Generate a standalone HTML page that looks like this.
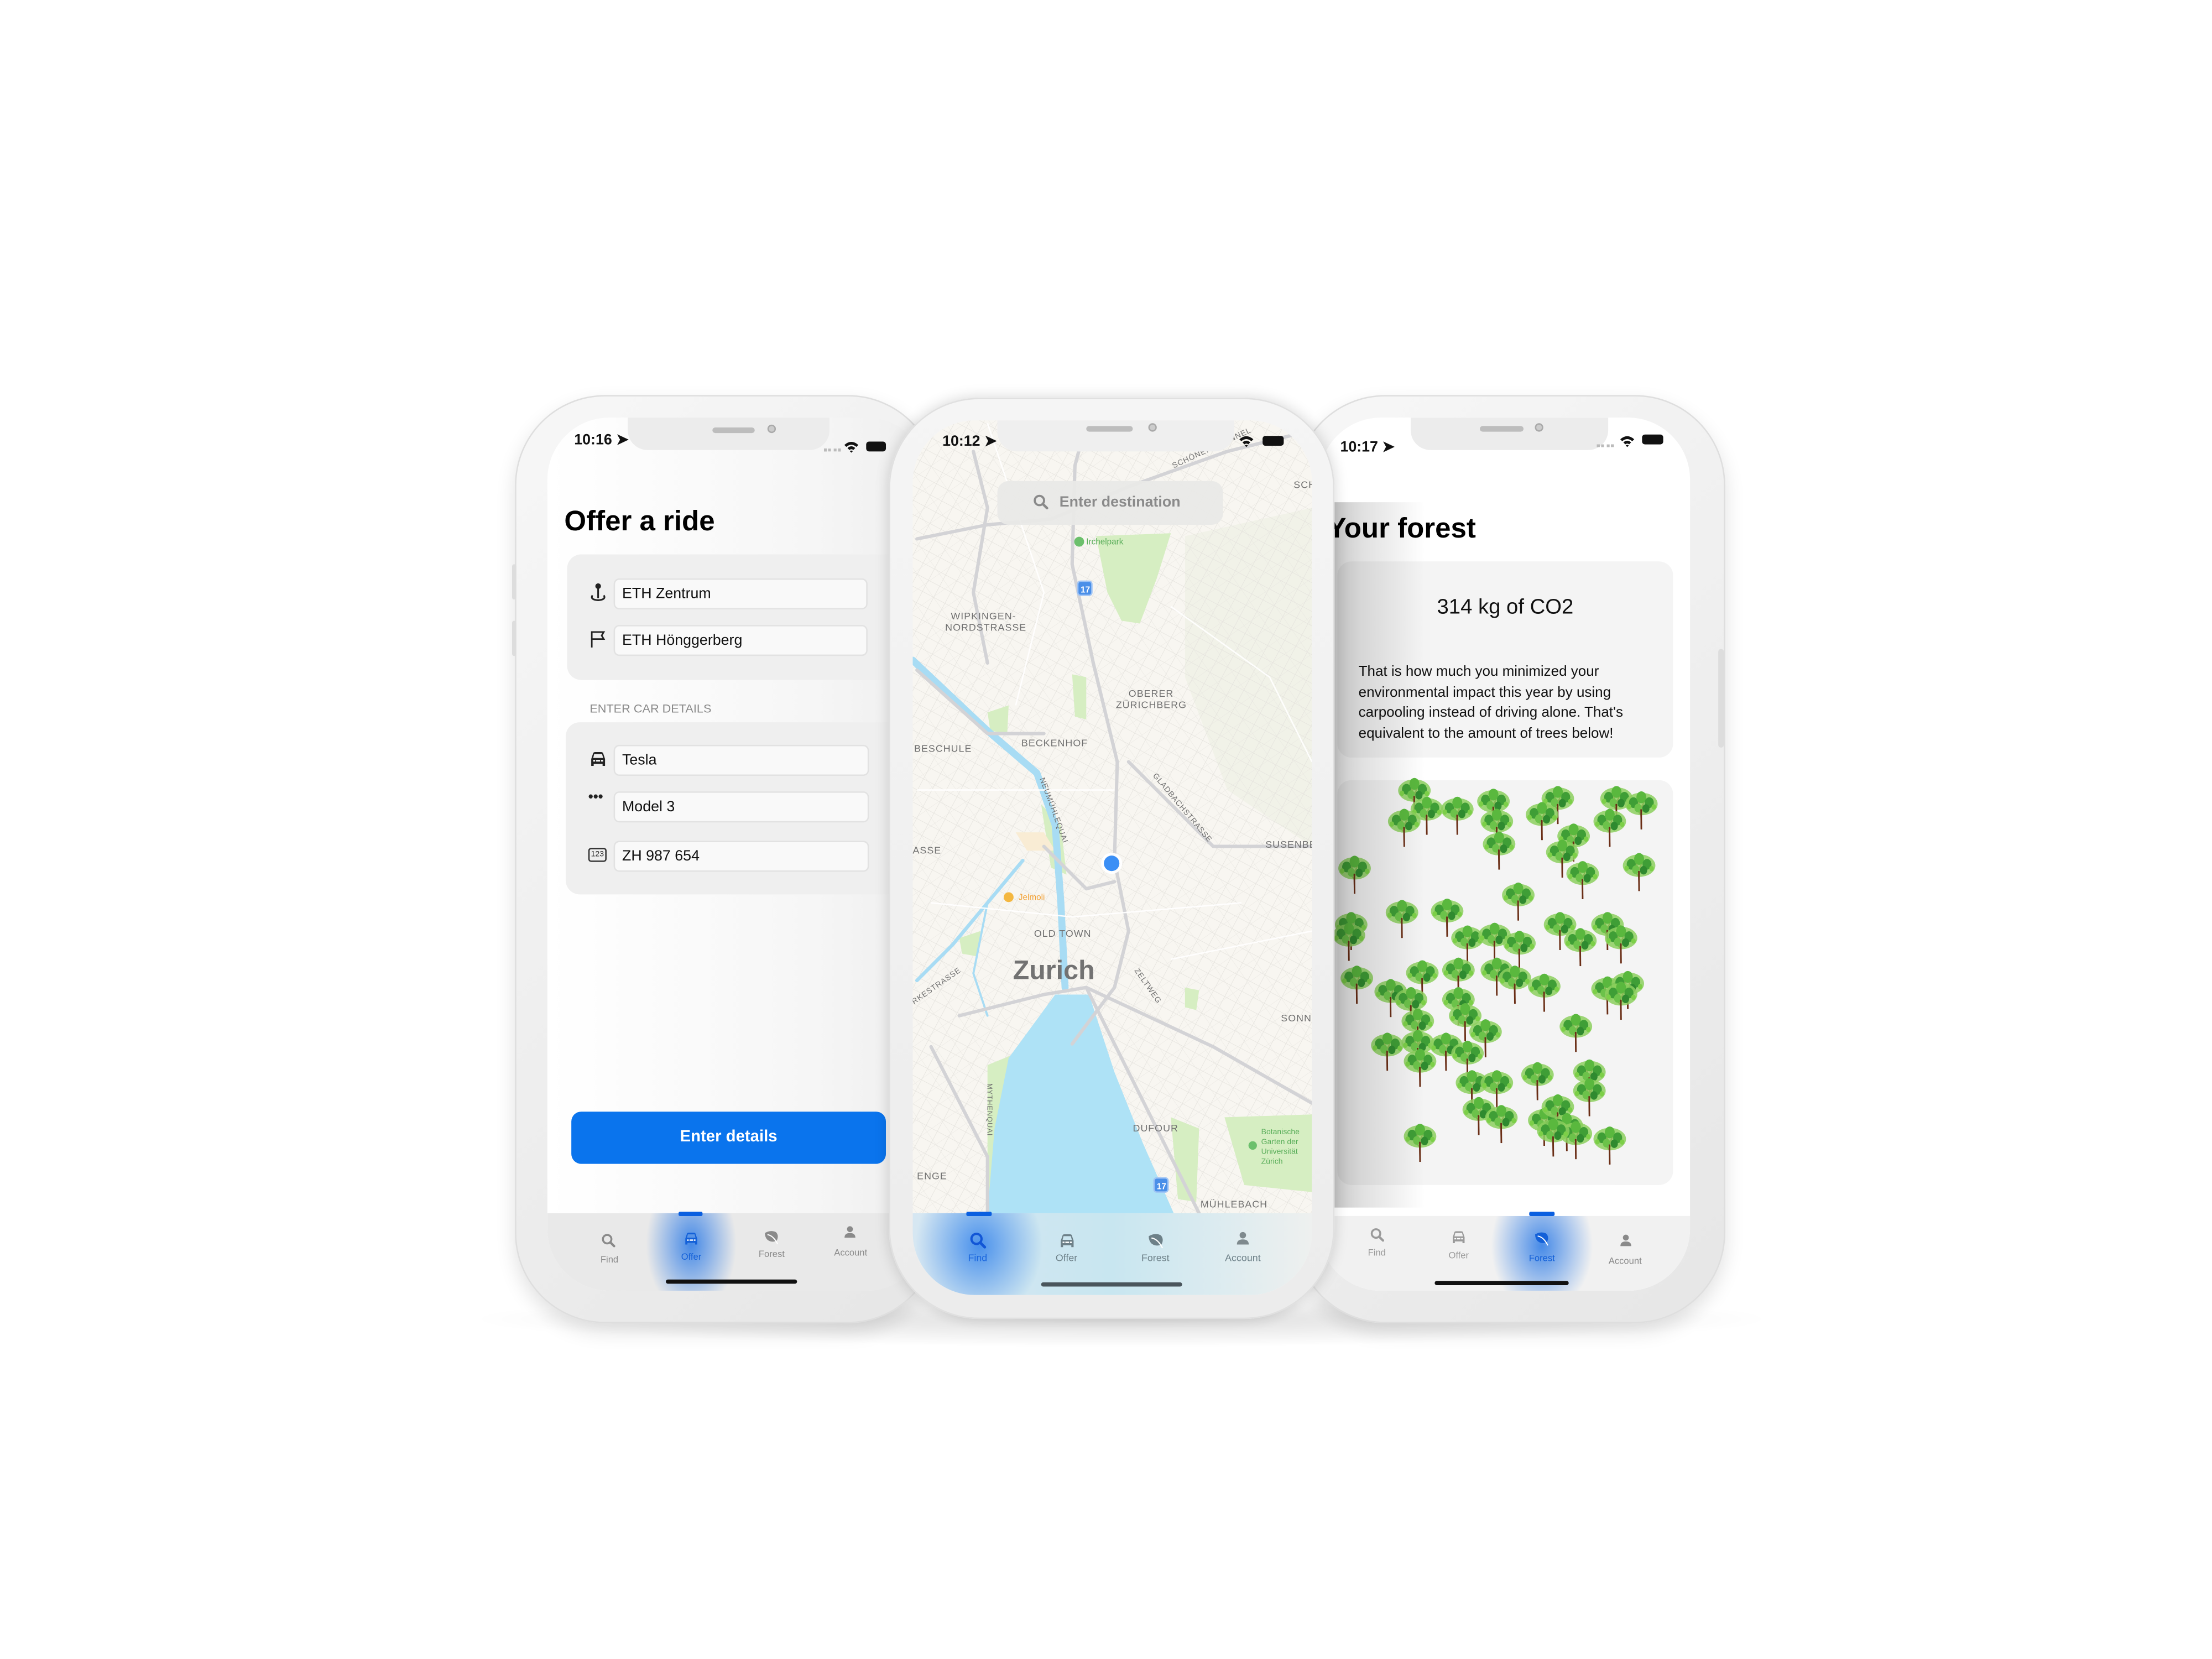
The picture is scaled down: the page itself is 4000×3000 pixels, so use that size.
<!DOCTYPE html>
<html><head><meta charset="utf-8">
<style>
*{margin:0;padding:0;box-sizing:border-box}
html,body{width:4000px;height:3000px;overflow:hidden;background:#fff}
#w{position:absolute;left:0;top:0;width:1568px;height:1176px;transform:scale(2.551);transform-origin:0 0;font-family:"Liberation Sans",sans-serif}
.a{position:absolute}
.body{position:absolute;border-radius:64px;background:linear-gradient(135deg,#f7f7f7,#e6e6e6);box-shadow:0 6px 14px rgba(0,0,0,.12),inset 0 0 0 1px #dedede}
.scr{position:absolute;border-radius:44px;overflow:hidden;background:#fff}
.notch{position:absolute;top:0;height:23px;background:#ececec;border-radius:0 0 14px 14px}
.spk{position:absolute;height:4px;border-radius:2px;background:#bdbdbd}
.cam{position:absolute;width:6px;height:6px;border-radius:50%;background:#ccc;border:1px solid #aaa}
.time{position:absolute;font-size:10.5px;font-weight:bold;color:#111}
.box{position:absolute;background:#efefef;border-radius:10px}
.fld{position:absolute;height:22px;background:#f9f9f9;border:1px solid #e2e2e2;border-radius:4px;font-size:10.5px;line-height:20px;padding-left:5px;color:#111}
.tab{position:absolute;font-size:6.5px;color:#8a8a8a;text-align:center;width:40px}
.hi{position:absolute;height:3px;border-radius:2px;background:#111}
</style></head><body>
<div id="w">
<svg width="0" height="0" style="position:absolute">
<defs>
<symbol id="mg" viewBox="0 0 20 20"><circle cx="8" cy="8" r="5.5" fill="none" stroke="currentColor" stroke-width="2.5"/><path d="M12 12 L17 17" stroke="currentColor" stroke-width="3" stroke-linecap="round"/></symbol>
<symbol id="car" viewBox="0 0 20 20"><path d="M3 10 L5 4 Q5.5 3 7 3 L13 3 Q14.5 3 15 4 L17 10 L17 17 L14.5 17 L14.5 15 L5.5 15 L5.5 17 L3 17Z M6 5 L5 9 L15 9 L14 5Z" fill="currentColor" fill-rule="evenodd"/><rect x="5" y="11" width="2" height="1.6" fill="#fff"/><rect x="13" y="11" width="2" height="1.6" fill="#fff"/><rect x="8" y="11" width="4" height="1.6" fill="#fff"/></symbol>
<symbol id="leaf" viewBox="0 0 20 20"><path d="M2 5 Q9 1 15 4 Q19 8 16 14 Q10 17 5 13 Q2 10 2 5Z" fill="currentColor"/><path d="M5 7 Q12 8 17 18" fill="none" stroke="#fff" stroke-width="1.3"/></symbol>
<symbol id="per" viewBox="0 0 20 20"><circle cx="10" cy="6" r="3.8" fill="currentColor"/><path d="M3 17 Q3 11 10 11 Q17 11 17 17Z" fill="currentColor"/></symbol>
<symbol id="wifi" viewBox="0 0 20 16"><path d="M1 6 Q10 -2 19 6 L16.5 8.5 Q10 3 3.5 8.5Z M5 10 Q10 5.5 15 10 L12.5 12.5 Q10 10.5 7.5 12.5Z M10 16 L8 14 Q10 12.5 12 14Z" fill="#111"/></symbol>
<symbol id="t" viewBox="0 0 150 150">
<path d="M75 150 L73 60 M74 95 L45 65 M74 85 L105 60 M74 70 L60 45 M73 75 L90 40" stroke="#6a2e16" stroke-width="6" fill="none"/>
<ellipse cx="75" cy="55" rx="72" ry="42" fill="#8ccf5e" opacity=".85"/>
<circle cx="40" cy="50" r="20" fill="#3f9e36"/><circle cx="75" cy="30" r="22" fill="#5ab83e"/><circle cx="110" cy="50" r="20" fill="#3f9e36"/><circle cx="60" cy="70" r="16" fill="#6cc24a"/><circle cx="95" cy="72" r="16" fill="#2f8a2f"/><circle cx="20" cy="65" r="10" fill="#7ccf48"/><circle cx="130" cy="66" r="10" fill="#7ccf48"/>
<path d="M75 150 L74 75" stroke="#6a2e16" stroke-width="7"/>
</symbol>
</defs></svg>

<div class="a" style="left:330px;top:915px;width:930px;height:40px;border-radius:50%;background:radial-gradient(ellipse at center,rgba(0,0,0,.13),rgba(0,0,0,0) 70%)"></div>

<!-- LEFT PHONE -->
<div class="body" style="left:365px;top:280px;width:300px;height:658px"></div>
<div class="a" style="left:363px;top:400px;width:3px;height:25px;background:#ddd;border-radius:2px"></div>
<div class="a" style="left:363px;top:440px;width:3px;height:25px;background:#ddd;border-radius:2px"></div>
<div class="scr" style="left:388px;top:296px;width:270px;height:619px;background:linear-gradient(90deg,#fff,#f6f6f6 70%,#eee)">
  <div class="notch" style="left:57px;width:143px"></div>
  <div class="spk" style="left:117px;top:7px;width:30px"></div>
  <div class="cam" style="left:156px;top:5px"></div>
  <div class="time" style="left:19px;top:10px">10:16 ➤</div>
  <div class="a" style="left:196px;top:22px;width:12px;height:2px;border-top:2px dotted #bbb"></div>
  <svg class="a" style="left:210px;top:16px" width="11" height="9"><use href="#wifi"/></svg>
  <div class="a" style="left:226px;top:17px;width:14px;height:7px;background:#111;border-radius:2px"></div>
  <div class="a" style="left:12px;top:63px;font-size:20px;font-weight:bold;color:#000">Offer a ride</div>
  <div class="box" style="left:14px;top:97px;width:250px;height:89px"></div>
  <svg class="a" style="left:29px;top:117px" width="14" height="14" viewBox="0 0 14 14"><circle cx="7" cy="2.5" r="2" fill="#222"/><path d="M7 4 V11 M3 9 Q1 12 7 12.5 Q13 12 11 9" fill="none" stroke="#222" stroke-width="1.2"/></svg>
  <div class="fld" style="left:47px;top:114px;width:180px">ETH Zentrum</div>
  <svg class="a" style="left:30px;top:151px" width="12" height="13" viewBox="0 0 12 13"><path d="M1.5 12 V1 H10 L8.5 3.5 L10 6 H1.5" fill="none" stroke="#222" stroke-width="1.1"/></svg>
  <div class="fld" style="left:47px;top:147px;width:180px">ETH Hönggerberg</div>
  <div class="a" style="left:30px;top:201px;font-size:8.5px;color:#8a8a8a">ENTER CAR DETAILS</div>
  <div class="box" style="left:13px;top:216px;width:250px;height:122px"></div>
  <svg class="a" style="left:29px;top:235px;color:#222" width="14" height="14"><use href="#car"/></svg>
  <div class="fld" style="left:47px;top:232px;width:181px">Tesla</div>
  <div class="a" style="left:29px;top:264px;font-size:10px;font-weight:bold;color:#222">•••</div>
  <div class="fld" style="left:47px;top:265px;width:181px">Model 3</div>
  <div class="a" style="left:29px;top:305px;width:13px;height:10px;border:1px solid #333;border-radius:2px;font-size:5.5px;line-height:8px;text-align:center;color:#222">123</div>
  <div class="fld" style="left:47px;top:300px;width:181px">ZH 987 654</div>
  <div class="a" style="left:17px;top:492px;width:223px;height:37px;background:#0a74ed;border-radius:7px;color:#fff;font-weight:bold;font-size:11.5px;text-align:center;line-height:37px">Enter details</div>
  <div class="a" style="left:0;top:564px;width:270px;height:55px;background:#e9e9e9"></div>
  <div class="a" style="left:62px;top:564px;width:80px;height:55px;background:radial-gradient(ellipse 40% 90% at 50% 40%,rgba(40,120,230,.85),rgba(60,140,230,0) 100%)"></div>
  <div class="a" style="left:93px;top:563px;width:17px;height:3px;background:#0a5fe0;border-radius:1px"></div>
  <svg class="a" style="left:38px;top:578px;color:#8a8a8a" width="11" height="11"><use href="#mg"/></svg>
  <svg class="a" style="left:96px;top:576px;color:#1360d8" width="12" height="12"><use href="#car"/></svg>
  <svg class="a" style="left:153px;top:575px;color:#8a8a8a" width="12" height="12"><use href="#leaf"/></svg>
  <svg class="a" style="left:209px;top:572px;color:#8a8a8a" width="11" height="11"><use href="#per"/></svg>
  <div class="tab" style="left:24px;top:594px">Find</div>
  <div class="tab" style="left:82px;top:592px;color:#1360d8">Offer</div>
  <div class="tab" style="left:139px;top:590px">Forest</div>
  <div class="tab" style="left:195px;top:589px">Account</div>
  <div class="hi" style="left:84px;top:611px;width:93px"></div>
</div>

<!-- RIGHT PHONE -->
<div class="body" style="left:918px;top:280px;width:305px;height:658px"></div>
<div class="a" style="left:1218px;top:460px;width:4px;height:70px;background:#ddd;border-radius:2px"></div>
<div class="scr" style="left:935px;top:296px;width:263px;height:619px">
  <div class="notch" style="left:65px;width:140px"></div>
  <div class="spk" style="left:114px;top:6px;width:31px"></div>
  <div class="cam" style="left:153px;top:4px"></div>
  <div class="time" style="left:15px;top:15px">10:17 ➤</div>
  <div class="a" style="left:197px;top:19px;width:12px;height:2px;border-top:2px dotted #bbb"></div>
  <svg class="a" style="left:213px;top:12px" width="11" height="9"><use href="#wifi"/></svg>
  <div class="a" style="left:229px;top:12px;width:15px;height:7px;background:#111;border-radius:2px"></div>
  <div class="a" style="left:6px;top:68px;font-size:20px;font-weight:bold;color:#000">Your forest</div>
  <div class="a" style="left:13px;top:102px;width:238px;height:139px;background:#f4f4f4;border-radius:10px"></div>
  <div class="a" style="left:13px;top:126px;width:238px;text-align:center;font-size:15px;color:#111">314 kg of CO2</div>
  <div class="a" style="left:28px;top:174px;width:215px;font-size:10.2px;line-height:14.7px;color:#111">That is how much you minimized your environmental impact this year by using carpooling instead of driving alone. That's equivalent to the amount of trees below!</div>
  <div class="a" style="left:13px;top:257px;width:238px;height:287px;background:#f4f4f4;border-radius:10px"></div>
  <svg class="a" style="left:5.8px;top:252.8px" width="251" height="298" viewBox="0 0 1568 1568" preserveAspectRatio="none">
  <g>
  <use href="#t" width="150" height="150" x="310" y="5"/><use href="#t" width="150" height="150" x="365" y="75"/><use href="#t" width="150" height="150" x="265" y="120"/><use href="#t" width="150" height="150" x="500" y="75"/><use href="#t" width="150" height="150" x="660" y="45"/><use href="#t" width="150" height="150" x="675" y="120"/><use href="#t" width="150" height="150" x="685" y="205"/><use href="#t" width="150" height="150" x="945" y="35"/><use href="#t" width="150" height="150" x="875" y="95"/><use href="#t" width="150" height="150" x="1015" y="175"/><use href="#t" width="150" height="150" x="965" y="235"/><use href="#t" width="150" height="150" x="1055" y="315"/><use href="#t" width="150" height="150" x="1205" y="35"/><use href="#t" width="150" height="150" x="1315" y="55"/><use href="#t" width="150" height="150" x="1175" y="120"/><use href="#t" width="150" height="150" x="1305" y="285"/><use href="#t" width="150" height="150" x="45" y="295"/><use href="#t" width="150" height="150" x="770" y="395"/><use href="#t" width="150" height="150" x="255" y="460"/><use href="#t" width="150" height="150" x="455" y="455"/><use href="#t" width="150" height="150" x="30" y="505"/><use href="#t" width="150" height="150" x="20" y="545"/><use href="#t" width="150" height="150" x="955" y="505"/><use href="#t" width="150" height="150" x="1045" y="565"/><use href="#t" width="150" height="150" x="1165" y="505"/><use href="#t" width="150" height="150" x="1225" y="555"/><use href="#t" width="150" height="150" x="545" y="555"/><use href="#t" width="150" height="150" x="665" y="545"/><use href="#t" width="150" height="150" x="775" y="575"/><use href="#t" width="150" height="150" x="55" y="705"/><use href="#t" width="150" height="150" x="345" y="685"/><use href="#t" width="150" height="150" x="505" y="675"/><use href="#t" width="150" height="150" x="675" y="675"/><use href="#t" width="150" height="150" x="755" y="705"/><use href="#t" width="150" height="150" x="885" y="735"/><use href="#t" width="150" height="150" x="205" y="755"/><use href="#t" width="150" height="150" x="295" y="785"/><use href="#t" width="150" height="150" x="325" y="865"/><use href="#t" width="150" height="150" x="505" y="785"/><use href="#t" width="150" height="150" x="535" y="845"/><use href="#t" width="150" height="150" x="625" y="905"/><use href="#t" width="150" height="150" x="1025" y="885"/><use href="#t" width="150" height="150" x="1165" y="745"/><use href="#t" width="150" height="150" x="1255" y="725"/><use href="#t" width="150" height="150" x="1225" y="765"/><use href="#t" width="150" height="150" x="190" y="955"/><use href="#t" width="150" height="150" x="325" y="945"/><use href="#t" width="150" height="150" x="450" y="955"/><use href="#t" width="150" height="150" x="545" y="985"/><use href="#t" width="150" height="150" x="335" y="1015"/><use href="#t" width="150" height="150" x="565" y="1095"/><use href="#t" width="150" height="150" x="675" y="1095"/><use href="#t" width="150" height="150" x="855" y="1065"/><use href="#t" width="150" height="150" x="1085" y="1055"/><use href="#t" width="150" height="150" x="1085" y="1125"/><use href="#t" width="150" height="150" x="595" y="1195"/><use href="#t" width="150" height="150" x="695" y="1225"/><use href="#t" width="150" height="150" x="885" y="1235"/><use href="#t" width="150" height="150" x="945" y="1185"/><use href="#t" width="150" height="150" x="985" y="1255"/><use href="#t" width="150" height="150" x="1025" y="1285"/><use href="#t" width="150" height="150" x="1175" y="1305"/><use href="#t" width="150" height="150" x="335" y="1295"/><use href="#t" width="150" height="150" x="925" y="1275"/>
  </g></svg>
  <div class="a" style="left:0;top:60px;width:75px;height:500px;background:linear-gradient(90deg,rgba(0,0,0,.28),rgba(0,0,0,.12) 40%,rgba(0,0,0,0))"></div>
  <div class="a" style="left:0;top:566px;width:263px;height:53px;background:#f1f1f1"></div>
  <div class="a" style="left:118px;top:566px;width:80px;height:53px;background:radial-gradient(ellipse 45% 90% at 50% 40%,rgba(40,120,230,.85),rgba(60,140,230,0) 100%)"></div>
  <div class="a" style="left:149px;top:563px;width:18px;height:3px;background:#0a5fe0;border-radius:1px"></div>
  <svg class="a" style="left:36px;top:574px;color:#9a9a9a" width="11" height="11"><use href="#mg"/></svg>
  <svg class="a" style="left:93px;top:575px;color:#9a9a9a" width="12" height="12"><use href="#car"/></svg>
  <svg class="a" style="left:152px;top:576px;color:#1360d8" width="12" height="12"><use href="#leaf"/></svg>
  <svg class="a" style="left:212px;top:578px;color:#8a8a8a" width="11" height="11"><use href="#per"/></svg>
  <div class="tab" style="left:21px;top:589px;color:#9a9a9a">Find</div>
  <div class="tab" style="left:79px;top:591px;color:#9a9a9a">Offer</div>
  <div class="tab" style="left:138px;top:593px;color:#1360d8">Forest</div>
  <div class="tab" style="left:197px;top:595px">Account</div>
  <div class="hi" style="left:82px;top:612px;width:95px"></div>
</div>

<!-- MIDDLE PHONE -->
<div class="body" style="left:630px;top:282px;width:316px;height:653px;background:linear-gradient(180deg,#f5f5f5,#ececec);box-shadow:0 0 10px rgba(0,0,0,.16),inset 0 0 0 1px #e0e0e0"></div>
<div class="scr" style="left:647px;top:298px;width:283px;height:620px;background:#f8f6f1">
<svg class="a" style="left:0;top:0" width="283" height="620" viewBox="647 298 283 620">
<defs>
<pattern id="st" width="9" height="9" patternUnits="userSpaceOnUse" patternTransform="rotate(28)"><path d="M0 0 H9 M0 0 V9" stroke="#e3e1dc" stroke-width=".6" fill="none"/></pattern>
<pattern id="st2" width="13" height="11" patternUnits="userSpaceOnUse" patternTransform="rotate(-35)"><path d="M0 0 H13 M0 0 V11" stroke="#e6e4df" stroke-width=".5" fill="none"/></pattern>
</defs>
<rect x="647" y="298" width="283" height="620" fill="#f8f6f1"/>
<path d="M840 380 L930 360 L930 600 L870 560 L840 480Z" fill="#f1f2e8"/>
<rect x="647" y="298" width="283" height="620" fill="url(#st)"/>
<rect x="647" y="298" width="283" height="620" fill="url(#st2)" opacity=".8"/>
<g fill="#d6eec2">
<path d="M777 380 L830 378 L820 410 L808 442 L795 440 L785 420Z"/>
<path d="M700 505 L715 500 L714 520 L702 518Z"/><path d="M738 570 L752 585 L756 620 L745 615Z"/>
<path d="M680 665 L695 660 L693 678 L682 676Z"/><path d="M868 792 L930 790 L930 845 L882 840Z"/>
<path d="M700 755 L717 748 L716 858 L700 858Z"/><path d="M830 792 L850 800 L848 852 L835 850Z"/>
<path d="M760 478 L770 480 L770 510 L762 508Z"/><path d="M840 700 L850 702 L848 716 L840 714Z"/>
</g>
<path d="M720 590 L740 590 L748 603 L728 603Z" fill="#f9ecd4"/>
<g fill="none" stroke-linecap="round" stroke-linejoin="round">
<path d="M647 468 L700 518 L735 548 L748 585 L752 640 L755 700" stroke="#a8dcf4" stroke-width="5"/>
<path d="M650 695 L675 670 L700 640 L725 610" stroke="#a8dcf4" stroke-width="2.5"/>
<path d="M700 640 L690 690 L700 720" stroke="#a8dcf4" stroke-width="1.5"/>
</g>
<path d="M748 705 L772 705 L790 760 L810 810 L832 860 L700 860 L705 800 L715 750Z" fill="#aee2f6"/>
<g fill="none" stroke="#d3d3d6" stroke-width="2.4" stroke-linecap="round" stroke-linejoin="round">
<path d="M770 300 L762 330 L760 400 L775 470 L792 540 L790 610 L800 660 L790 700 L760 740"/>
<path d="M650 382 L700 372 L745 368 L800 345 L870 320 L930 305"/>
<path d="M680 720 L740 705 L770 700 L860 742 L930 782"/>
<path d="M800 540 L860 600 L930 600"/>
<path d="M660 742 L700 820 L700 860"/>
<path d="M770 700 L815 790 L850 860"/>
<path d="M650 475 L700 520 L740 520"/>
<path d="M740 600 L770 630 L790 625"/>
<path d="M690 320 L700 360 L690 420 L700 470"/>
</g>
<g fill="none" stroke="#fff" stroke-width="1" opacity=".9">
<path d="M650 560 L720 560 L790 560 M700 300 L740 420 L720 500 M830 430 L900 480 L930 540 M660 640 L760 650 L880 640 M830 680 L930 660"/>
</g>
<g font-family="'Liberation Sans Narrow','Liberation Sans',sans-serif" fill="#707070" font-size="7" letter-spacing=".4">
<text x="674" y="439">WIPKINGEN-</text><text x="670" y="447">NORDSTRASSE</text>
<text x="800" y="494">OBERER</text><text x="791" y="502">ZÜRICHBERG</text>
<text x="724" y="529">BECKENHOF</text><text x="648" y="533">BESCHULE</text>
<text x="897" y="601">SUSENBE</text><text x="647" y="605">ASSE</text>
<text x="733" y="664">OLD TOWN</text><text x="908" y="724">SONNE</text>
<text x="803" y="802">DUFOUR</text><text x="650" y="836">ENGE</text>
<text x="851" y="856">MÜHLEBACH</text><text x="917" y="346">SCH</text>
<text x="0" y="0" transform="translate(737,552) rotate(70)" font-size="5.5">NEUMÜHLEQUAI</text>
<text x="0" y="0" transform="translate(817,550) rotate(50)" font-size="5.5">GLADBACHSTRASSE</text>
<text x="0" y="0" transform="translate(804,688) rotate(55)" font-size="5.5">ZELTWEG</text>
<text x="0" y="0" transform="translate(832,332) rotate(-25)" font-size="5.5">SCHÖNEICHTUNNEL</text>
<text x="0" y="0" transform="translate(700,768) rotate(90)" font-size="5">MYTHENQUAI</text>
<text x="0" y="0" transform="translate(648,712) rotate(-35)" font-size="5.5">RKESTRASSE</text>
</g>
<text x="718" y="694" font-family="'Liberation Sans',sans-serif" font-size="19" font-weight="bold" fill="#727272">Zurich</text>
<text x="722" y="638" font-family="'Liberation Sans',sans-serif" font-size="6" fill="#f2a33a">Jelmoli</text>
<circle cx="715" cy="636" r="3.5" fill="#f4b740"/>
<text x="770" y="386" font-family="'Liberation Sans',sans-serif" font-size="6" fill="#5aae5a">Irchelpark</text>
<circle cx="765" cy="384" r="3.5" fill="#6cc06c"/>
<text x="894" y="804" font-family="'Liberation Sans',sans-serif" font-size="5.5" fill="#5aae5a">Botanische</text>
<text x="894" y="811" font-family="'Liberation Sans',sans-serif" font-size="5.5" fill="#5aae5a">Garten der</text>
<text x="894" y="818" font-family="'Liberation Sans',sans-serif" font-size="5.5" fill="#5aae5a">Universität</text>
<text x="894" y="825" font-family="'Liberation Sans',sans-serif" font-size="5.5" fill="#5aae5a">Zürich</text>
<circle cx="888" cy="812" r="3" fill="#6cc06c"/>
<rect x="764" y="412" width="10" height="10" rx="2" fill="#4a8fe8" stroke="#9fc4f5"/><text x="766" y="420" font-size="6" fill="#fff" font-family="'Liberation Sans',sans-serif" font-weight="bold">17</text>
<rect x="818" y="835" width="10" height="10" rx="2" fill="#4a8fe8" stroke="#9fc4f5"/><text x="820" y="843" font-size="6" fill="#fff" font-family="'Liberation Sans',sans-serif" font-weight="bold">17</text>
<circle cx="788" cy="612" r="7.5" fill="#fff" opacity=".95"/><circle cx="788" cy="612" r="5.5" fill="#3b8ff5"/>
</svg>
  <div class="notch" style="left:60px;width:168px;background:#efefef;height:22px"></div>
  <div class="spk" style="left:123px;top:4px;width:33px"></div>
  <div class="cam" style="left:167px;top:2px"></div>
  <div class="time" style="left:21px;top:9px">10:12 ➤</div>
  <svg class="a" style="left:231px;top:10px" width="11" height="9"><use href="#wifi"/></svg>
  <div class="a" style="left:248px;top:11px;width:15px;height:7px;background:#111;border-radius:2px"></div>
  <div class="a" style="left:60px;top:43px;width:160px;height:31px;background:rgba(233,233,231,.95);border-radius:8px"></div>
  <svg class="a" style="left:85px;top:52px;color:#8a8a8a" width="12" height="12"><use href="#mg"/></svg>
  <div class="a" style="left:104px;top:52px;font-size:10.5px;font-weight:bold;color:#8a8a8a">Enter destination</div>
  <div class="a" style="left:0;top:562px;width:283px;height:58px;background:linear-gradient(90deg,#d6e7f2 0%,#c8e6f0 50%,#eef0ef 100%)"></div>
  <div class="a" style="left:0;top:562px;width:100px;height:58px;background:radial-gradient(ellipse 45% 90% at 47% 40%,rgba(50,130,235,.85),rgba(80,150,235,0) 100%)"></div>
  <div class="a" style="left:38px;top:561px;width:18px;height:3px;background:#0a5fe0;border-radius:1px"></div>
  <svg class="a" style="left:40px;top:575px;color:#1256d6" width="13" height="13"><use href="#mg"/></svg>
  <svg class="a" style="left:103px;top:575px;color:#6d8088" width="13" height="13"><use href="#car"/></svg>
  <svg class="a" style="left:166px;top:575px;color:#6d8088" width="13" height="13"><use href="#leaf"/></svg>
  <svg class="a" style="left:228px;top:574px;color:#7f8a8e" width="12" height="12"><use href="#per"/></svg>
  <div class="tab" style="left:26px;top:591px;font-size:7px;color:#1a66dd">Find</div>
  <div class="tab" style="left:89px;top:591px;font-size:7px;color:#6d8088">Offer</div>
  <div class="tab" style="left:152px;top:591px;font-size:7px;color:#6d8088">Forest</div>
  <div class="tab" style="left:214px;top:591px;font-size:7px;color:#6d8088">Account</div>
  <div class="hi" style="left:91px;top:611px;width:100px;background:#4a555c"></div>
</div>
</div>
</body></html>
